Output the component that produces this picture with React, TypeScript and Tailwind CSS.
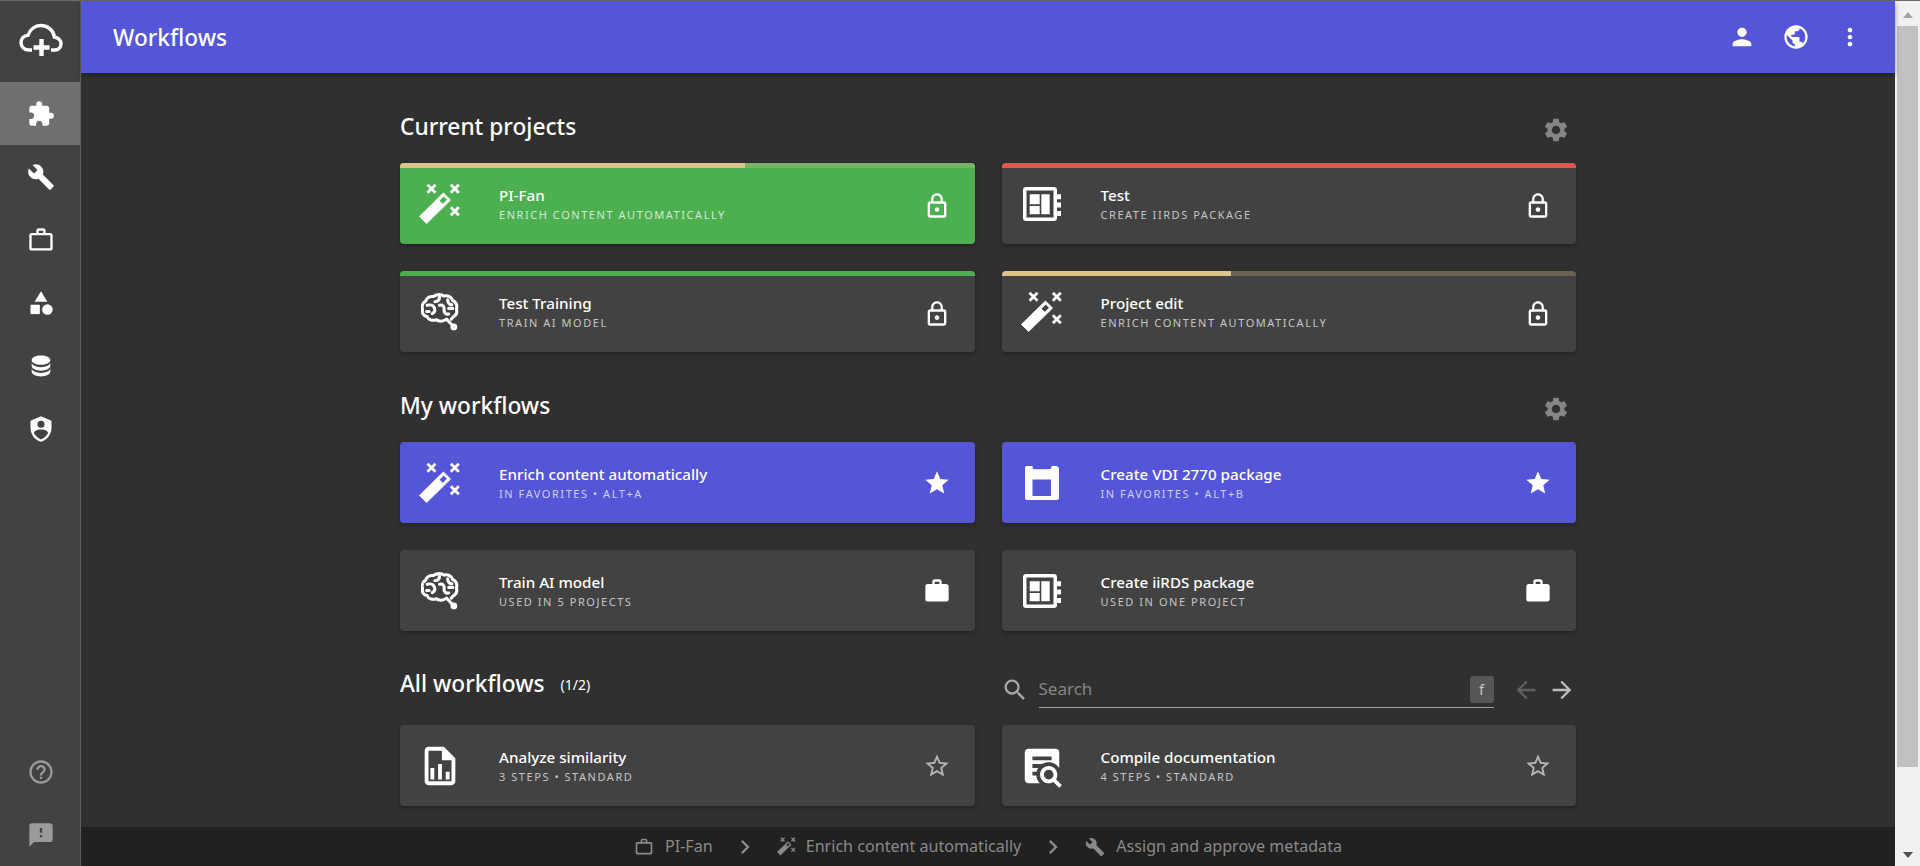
import type { ReactNode } from "react";
import {
  MdArrowBack,
  MdArrowForward,
  MdBuild,
  MdCategory,
  MdChevronRight,
  MdExtension,
  MdHelpOutline,
  MdLockOutline,
  MdMoreVert,
  MdOutlineWorkOutline,
  MdPerson,
  MdPublic,
  MdSearch,
  MdSettings,
  MdSmsFailed,
  MdStar,
  MdStarBorder,
  MdWork,
} from "react-icons/md";

const font = "font-['Noto_Sans',sans-serif]";

function CloudLogo() {
  return (
    <svg width="44" height="34" viewBox="0 0 44 34" fill="none" className="text-white">
      <path
        d="M13 27H10C5.5 27 2 23.8 2 19.6C2 15.6 5 12.6 9 12.2C10.8 6.6 15.8 2.5 22 2.5C29 2.5 34.6 7.6 35.4 14C39 14.6 42 17 42 20.8C42 24.4 39.4 26.8 36 27H32"
        stroke="currentColor"
        strokeWidth="3.4"
      />
      <path d="M22.5 16V33M14.5 24.5H30.5" stroke="currentColor" strokeWidth="4.4" />
    </svg>
  );
}

function WandIcon({ size = 42 }: { size?: number }) {
  return (
    <svg width={size} height={size} viewBox="0 0 42 42" fill="none">
      <path
        fillRule="evenodd"
        fill="currentColor"
        stroke="currentColor"
        strokeWidth="0.8"
        strokeLinejoin="round"
        d="M0.4 33.4L7.6 40.6L31.6 17.1L24.4 9.9ZM20.2 17.7L23.8 21.3L28.3 16.8L24.7 13.2Z"
      />
      <path
        d="M8.5 1.8L16.5 9.8M16.5 1.8L8.5 9.8M31.8 1.8L39.8 9.8M39.8 1.8L31.8 9.8M31.8 24.3L39.8 32.3M39.8 24.3L31.8 32.3"
        stroke="currentColor"
        strokeWidth="2.8"
      />
    </svg>
  );
}

function BrainIcon() {
  return (
    <svg width="38" height="38" viewBox="0 0 37 37" fill="none" stroke="currentColor" strokeWidth="3" strokeLinecap="round" strokeLinejoin="round">
      <path d="M24 26C21 28 17 28 15 26C11 27.5 7 26 6 23C2 22.5 .8 19 1.5 16C.5 13 1.5 9.5 4.5 8C5.5 4.5 9 3 12 3.5C14.5 1 20 1 22.5 3C26 2 30 4 31 7.5C34 9 35.5 12 34.5 15.5C35.5 19 34 22 31 23.5C30.5 24.5 30 25 29.5 25.5" />
      <path d="M18 4C18 7 16 8.5 13.5 8.5M6 12C9 11 12 12 13 14.5C14 17 13 19 11 20M18 12C21 11 23 13 22.5 16C22 19 24 21 27 20.5M26 6.5C26 9 27 11 30 11.5M27 15H31M5.5 18H8" />
      <path d="M25 25.5L30 31" />
      <circle cx="32" cy="33" r="1.8" />
    </svg>
  );
}

function NotebookIcon() {
  return (
    <svg width="38" height="34" viewBox="0 0 38 34" fill="currentColor">
      <path
        fillRule="evenodd"
        d="M3 0H31C32.8 0 34 1.2 34 3V31C34 32.8 32.8 34 31 34H3C1.2 34 0 32.8 0 31V3C0 1.2 1.2 0 3 0ZM3.5 3.6V30.4H30.5V3.6Z"
      />
      <path d="M6.7 7.3H16.7V17.3H6.7ZM6.7 19H16.7V27.3H6.7ZM18.3 7.3H26.7V27.3H18.3Z" />
      <path d="M34 7.3H38V12.3H34ZM34 15.6H38V20.6H34ZM34 24H38V29H34Z" />
    </svg>
  );
}

function FloppyIcon() {
  return (
    <svg width="34" height="34" viewBox="0 0 34 34" fill="currentColor">
      <path
        fillRule="evenodd"
        d="M2 0H7.5V1C7.5 2.6 8.5 3.2 10 3.2H24C25.5 3.2 26.5 2.6 26.5 1V0H32L34 2V32C34 33.2 33.2 34 32 34H2C.8 34 0 33.2 0 32V2C0 .8.8 0 2 0ZM7.5 13.4V30H26V13.4Z"
      />
    </svg>
  );
}

function FileChartIcon() {
  return (
    <svg width="46" height="46" viewBox="0 0 24 24" fill="currentColor">
      <path d="M14 2H6C4.89 2 4 2.9 4 4V20C4 21.11 4.89 22 6 22H18C19.11 22 20 21.11 20 20V8L14 2M18 20H6V4H13V9H18V20M9 13V19H7V13H9M15 15V19H17V15H15M11 11V19H13V11H11Z" />
    </svg>
  );
}

function DocSearchIcon() {
  return (
    <svg width="46" height="46" viewBox="0 0 24 24" fill="currentColor">
      <path d="M15.5,12C18,12 20,14 20,16.5C20,17.38 19.75,18.21 19.31,18.9L22.39,22L21,23.39L17.88,20.32C17.19,20.75 16.37,21 15.5,21C13,21 11,19 11,16.5C11,14 13,12 15.5,12M15.5,14A2.5,2.5 0 0,0 13,16.5A2.5,2.5 0 0,0 15.5,19A2.5,2.5 0 0,0 18,16.5A2.5,2.5 0 0,0 15.5,14M7,15V17H9C9.14,18.55 9.8,19.94 10.81,21H5C3.89,21 3,20.1 3,19V5C3,3.89 3.89,3 5,3H19A2,2 0 0,1 21,5V13.03C19.85,11.21 17.82,10 15.5,10C14.23,10 13.04,10.37 12.04,11H7V13H10C9.64,13.6 9.34,14.28 9.17,15H7M17,9V7H7V9H17Z" />
    </svg>
  );
}

function DatabaseIcon() {
  return (
    <svg width="28" height="28" viewBox="0 0 24 24" fill="currentColor">
      <path d="M12,3C7.58,3 4,4.79 4,7C4,9.21 7.58,11 12,11C16.42,11 20,9.21 20,7C20,4.79 16.42,3 12,3M4,9V12C4,14.21 7.58,16 12,16C16.42,16 20,14.21 20,12V9C20,11.21 16.42,13 12,13C7.58,13 4,11.21 4,9M4,14V17C4,19.21 7.58,21 12,21C16.42,21 20,19.21 20,17V14C20,16.21 16.42,18 12,18C7.58,18 4,16.21 4,14Z" />
    </svg>
  );
}

function ShieldIcon() {
  return (
    <svg width="28" height="28" viewBox="0 0 24 24" fill="currentColor">
      <path d="M12,1L3,5V11C3,16.55 6.84,21.74 12,23C17.16,21.74 21,16.55 21,11V5L12,1M12,5A3,3 0 0,1 15,8A3,3 0 0,1 12,11A3,3 0 0,1 9,8A3,3 0 0,1 12,5M17.13,17C15.92,18.85 14.11,20.24 12,20.92C9.89,20.24 8.08,18.85 6.87,17C6.53,16.5 6.24,16 6,15.47C6,13.82 8.71,12.47 12,12.47C15.29,12.47 18,13.79 18,15.47C17.76,16 17.47,16.5 17.13,17Z" />
    </svg>
  );
}

function NavItem({ children, active, muted }: { children: ReactNode; active?: boolean; muted?: boolean }) {
  return (
    <div
      className={`flex h-[63px] items-center justify-center pl-px ${active ? "bg-[#6f6f6f]" : ""} ${
        muted ? "text-[#9a9a9a]" : "text-white"
      }`}
    >
      {children}
    </div>
  );
}

function Sidebar() {
  return (
    <aside className="flex h-full w-[81px] shrink-0 flex-col border-r border-[#5f5f5f] bg-[#424242]">
      <div className="flex h-[81px] items-center justify-center pb-1 pl-px">
        <CloudLogo />
      </div>
      <NavItem active>
        <MdExtension size={28} />
      </NavItem>
      <NavItem>
        <MdBuild size={28} />
      </NavItem>
      <NavItem>
        <MdOutlineWorkOutline size={28} />
      </NavItem>
      <NavItem>
        <MdCategory size={28} />
      </NavItem>
      <NavItem>
        <DatabaseIcon />
      </NavItem>
      <NavItem>
        <ShieldIcon />
      </NavItem>
      <div className="mt-auto">
        <NavItem muted>
          <MdHelpOutline size={28} />
        </NavItem>
        <NavItem muted>
          <MdSmsFailed size={28} />
        </NavItem>
      </div>
    </aside>
  );
}

type CardProps = {
  icon: ReactNode;
  title: string;
  sub: string;
  action: ReactNode;
  bg?: string;
  subColor?: string;
  bar?: ReactNode;
};

function Card({ icon, title, sub, action, bg = "bg-[#424242]", subColor = "text-[#c6c6c6]", bar }: CardProps) {
  return (
    <div className={`flex h-[81px] flex-col overflow-hidden rounded-[4px] text-white shadow-[0_2px_4px_rgba(0,0,0,0.3)] ${bg}`}>
      {bar ?? <div className="h-[5px] shrink-0" />}
      <div className="flex min-h-0 flex-1 items-center">
        <div className="mr-[19px] flex w-[80px] shrink-0 items-center justify-center pb-1">{icon}</div>
        <div className="min-w-0 flex-1 pb-[8px]">
          <div className="text-[15.2px] leading-[24px] font-medium">{title}</div>
          <div className={`text-[11px] leading-[15px] tracking-[1.55px] ${subColor}`}>{sub}</div>
        </div>
        <div className="flex w-[76px] shrink-0 items-center justify-center pb-1">{action}</div>
      </div>
    </div>
  );
}

function Bar({ done, rest, percent }: { done: string; rest: string; percent: string }) {
  return (
    <div className={`flex h-[5px] shrink-0 ${rest}`}>
      <div className={`h-full ${percent} ${done}`} />
    </div>
  );
}

function SectionHead({ title }: { title: string }) {
  return (
    <div className="flex h-[34px] items-center justify-between">
      <h2 className="text-[22.7px] leading-none font-medium text-white">{title}</h2>
      <MdSettings size={28} className="mr-[6px] mt-[5px] text-[#858585]" />
    </div>
  );
}

const lock = <MdLockOutline size={28} className="mt-[3px]" />;
const star = <MdStar size={28} />;
const work = <MdWork size={28} />;
const starOutline = <MdStarBorder size={28} className="text-[#b5b5b5]" />;

export default function App() {
  return (
    <div className={`flex h-[866px] w-[1920px] flex-col overflow-hidden bg-[#303030] ${font}`}>
      <div className="h-px shrink-0 bg-[#6a6a6a]" />
      <div className="flex min-h-0 flex-1">
        <Sidebar />

        <div className="flex min-w-0 flex-1 flex-col">
          <header className="z-10 flex h-[72px] shrink-0 items-center justify-between bg-[#5555d8] pl-[32px] pr-[31px] text-white shadow-[0_2px_5px_rgba(0,0,0,0.35)]">
            <h1 className="pt-[2px] text-[22.7px] font-medium">Workflows</h1>
            <div className="flex items-center gap-[26px]">
              <MdPerson size={28} />
              <MdPublic size={28} />
              <MdMoreVert size={28} />
            </div>
          </header>

          <main className="min-h-0 flex-1 overflow-hidden">
            <div className="mx-auto w-[1176px] pt-[37px]">
              <SectionHead title="Current projects" />
              <div className="mt-[19px] grid grid-cols-2 gap-x-[27px] gap-y-[27px]">
                <Card
                  bg="bg-[#4caf50]"
                  subColor="text-[#d2ebd3]"
                  bar={<Bar percent="w-[60%]" done="bg-[#dcc488]" rest="bg-[#76b563]" />}
                  icon={<WandIcon />}
                  title="PI-Fan"
                  sub="ENRICH CONTENT AUTOMATICALLY"
                  action={lock}
                />
                <Card
                  bar={<div className="h-[5px] shrink-0 bg-[#f45050]" />}
                  icon={<NotebookIcon />}
                  title="Test"
                  sub="CREATE IIRDS PACKAGE"
                  action={lock}
                />
                <Card
                  bar={<div className="h-[5px] shrink-0 bg-[#4caf50]" />}
                  icon={<BrainIcon />}
                  title="Test Training"
                  sub="TRAIN AI MODEL"
                  action={lock}
                />
                <Card
                  bar={<Bar percent="w-[40%]" done="bg-[#dcc488]" rest="bg-[#6b6353]" />}
                  icon={<WandIcon />}
                  title="Project edit"
                  sub="ENRICH CONTENT AUTOMATICALLY"
                  action={lock}
                />
              </div>

              <div className="mt-[37px]">
                <SectionHead title="My workflows" />
              </div>
              <div className="mt-[19px] grid grid-cols-2 gap-x-[27px] gap-y-[27px]">
                <Card
                  bg="bg-[#5555d8]"
                  subColor="text-[#cfcff3]"
                  icon={<WandIcon />}
                  title="Enrich content automatically"
                  sub="IN FAVORITES • ALT+A"
                  action={star}
                />
                <Card
                  bg="bg-[#5555d8]"
                  subColor="text-[#cfcff3]"
                  icon={<FloppyIcon />}
                  title="Create VDI 2770 package"
                  sub="IN FAVORITES • ALT+B"
                  action={star}
                />
                <Card icon={<BrainIcon />} title="Train AI model" sub="USED IN 5 PROJECTS" action={work} />
                <Card icon={<NotebookIcon />} title="Create iiRDS package" sub="USED IN ONE PROJECT" action={work} />
              </div>

              <div className="mt-[38px] grid grid-cols-2 gap-x-[27px]">
                <div className="flex h-[41px] items-center pb-[10px] text-white">
                  <h2 className="text-[22.7px] leading-none font-medium">All workflows</h2>
                  <span className="ml-[16px] text-[14px]">(1/2)</span>
                </div>
                <div className="flex h-[41px] items-center text-[#bdbdbd]">
                  <MdSearch size={28} className="ml-[-1px] text-[#a8a8a8]" />
                  <div className="ml-[10px] flex h-[36px] w-[455px] items-center justify-between border-b border-[#9e9e9e]">
                    <span className="text-[17px] text-[#858585]">Search</span>
                    <span className="flex h-[27px] w-[24px] items-center justify-center rounded-[3px] bg-[#565656] text-[15px] text-[#c4c4c4]">
                      f
                    </span>
                  </div>
                  <MdArrowBack size={28} className="ml-[18px] text-[#606060]" />
                  <MdArrowForward size={28} className="ml-[8px]" />
                </div>
              </div>
              <div className="mt-[15px] grid grid-cols-2 gap-x-[27px]">
                <Card
                  icon={<FileChartIcon />}
                  title="Analyze similarity"
                  sub="3 STEPS • STANDARD"
                  action={starOutline}
                />
                <Card
                  icon={<DocSearchIcon />}
                  title="Compile documentation"
                  sub="4 STEPS • STANDARD"
                  action={starOutline}
                />
              </div>
            </div>
          </main>

          <footer className="flex h-[39px] shrink-0 items-center justify-center bg-[#212121] text-[16.1px] text-[#8a8a8a]">
            <MdOutlineWorkOutline size={20} />
            <span className="ml-[11px]">PI-Fan</span>
            <MdChevronRight size={28} className="mx-[18px]" />
            <WandIcon size={19} />
            <span className="ml-[10px]">Enrich content automatically</span>
            <MdChevronRight size={28} className="mx-[18px]" />
            <MdBuild size={20} />
            <span className="ml-[11px]">Assign and approve metadata</span>
          </footer>
        </div>

        <div className="flex h-full w-[25px] shrink-0 flex-col items-center bg-[#f1f1f1]">
          <div className="mt-[11px] h-0 w-0 border-x-[5px] border-b-[6px] border-x-transparent border-b-[#a3a3a3]" />
          <div className="mt-[8px] h-[741px] w-[21px] bg-[#c1c1c1]" />
          <div className="mt-auto mb-[8px] h-0 w-0 border-x-[5px] border-t-[6px] border-x-transparent border-t-[#505050]" />
        </div>
      </div>
    </div>
  );
}
